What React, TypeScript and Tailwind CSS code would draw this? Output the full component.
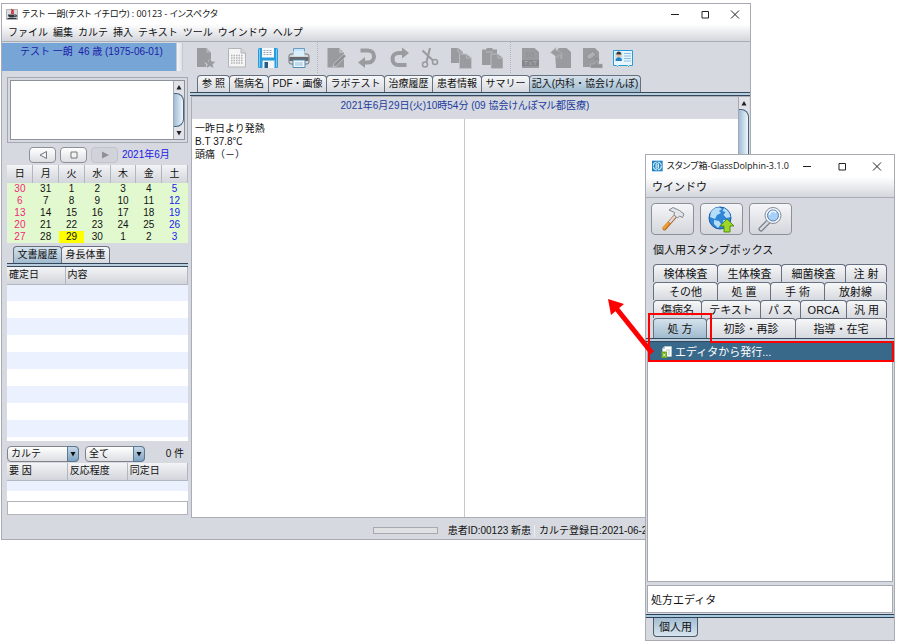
import clsx from "clsx";
import type { ReactNode } from "react";

const GRAY = "#999b9e";

const menus = ["ファイル", "編集", "カルテ", "挿入", "テキスト", "ツール", "ウインドウ", "ヘルプ"];

const chartTabs = [
  { label: "参 照", width: "w-[31px]" },
  { label: "傷病名", width: "w-[38px]" },
  { label: "PDF・画像", width: "w-[57px]" },
  { label: "ラボテスト", width: "w-[57px]" },
  { label: "治療履歴", width: "w-[47px]" },
  { label: "患者情報", width: "w-[48px]" },
  { label: "サマリー", width: "w-[47px]" },
  { label: "記入(内科・協会けんぽ)", width: "w-[110px]", active: true },
];

const stampTabs = [
  [
    { label: "検体検査", width: "w-[63px]" },
    { label: "生体検査", width: "w-[63px]" },
    { label: "細菌検査", width: "w-[63px]" },
    { label: "注 射", width: "flex-1" },
  ],
  [
    { label: "その他", width: "w-[63px]" },
    { label: "処 置", width: "w-[52px]" },
    { label: "手 術", width: "w-[53px]" },
    { label: "放射線", width: "flex-1" },
  ],
  [
    { label: "傷病名", width: "w-[47px]" },
    { label: "テキスト", width: "w-[58px]" },
    { label: "パ ス", width: "w-[39px]" },
    { label: "ORCA", width: "w-[45px]" },
    { label: "汎 用", width: "flex-1" },
  ],
  [
    { label: "処 方", width: "w-[52px]", active: true },
    { label: "初診・再診", width: "w-[88px]" },
    { label: "指導・在宅", width: "flex-1" },
  ],
];

const weekdays = ["日", "月", "火", "水", "木", "金", "土"];

const weeks = [
  [30, 31, 1, 2, 3, 4, 5],
  [6, 7, 8, 9, 10, 11, 12],
  [13, 14, 15, 16, 17, 18, 19],
  [20, 21, 22, 23, 24, 25, 26],
  [27, 28, 29, 30, 1, 2, 3],
];

export default function App() {
  return (
    <div className="relative flex min-h-screen bg-white pt-[3px] pr-[149px] pb-[104px] pl-px font-['Liberation_Sans','Noto_Sans_CJK_JP',sans-serif] text-[#111]">
      <InspectorWindow />
      <StampWindow />
    </div>
  );
}

function InspectorWindow() {
  return (
    <main className="flex min-w-0 flex-1 flex-col border border-[#a9abb3] bg-[#d6d9df] text-[10px] leading-3">
      <header className="flex h-5 items-center bg-white pl-1">
        <JavaIcon />
        <h1 className="ml-1 flex-1 truncate font-['Open_Sans','Noto_Sans_CJK_JP',sans-serif] text-[9px] [font-feature-settings:'palt']">
          テスト 一朗(テスト イチロウ) : 00123 - インスペクタ
        </h1>
        <WindowButtons width="w-[30px]" />
      </header>
      <nav className="flex h-[18px] items-center gap-[5px] border-b border-[#a9adb5] bg-linear-to-b from-white to-[#d3d6dc] pl-[6px]">
        {menus.map((menu) => (
          <button key={menu}>{menu}</button>
        ))}
      </nav>
      <div className="flex min-h-0 flex-1">
        <PatientPanel />
        <ChartPanel />
      </div>
    </main>
  );
}

function PatientPanel() {
  return (
    <aside className="flex w-[188px] shrink-0 flex-col">
      <div className="mt-px flex h-7">
        <div className="w-[174px] bg-[#77a6d6] pt-[3px] pl-[18px] whitespace-pre text-[#1c1ca8]">
          テスト 一朗  46 歳 (1975-06-01)
        </div>
        <div className="w-[7px] border-x border-[#c3c7cf] bg-linear-to-r from-[#f4f5f8] to-[#dfe2e8]" />
      </div>

      <div className="mt-[6px] mr-[2px] ml-[5px] flex flex-1 flex-col">
        <div className="h-[66px] border border-[#a4a8b0] p-[2px]">
          <div className="flex h-full border border-[#8e929a] bg-white">
            <textarea aria-label="メモ" className="min-w-0 flex-1 resize-none outline-none" />
            <ScrollBar thumb="h-9" />
          </div>
        </div>

        <div className="mt-1 flex h-4 items-center pl-[22px]">
          <PagerButton label="前の月">
            <path d="M8.5 1.5v7L2 5z" fill="#f2f2f2" stroke="#777" />
          </PagerButton>
          <PagerButton label="今月">
            <path d="M2 2h6v6H2z" fill="#f2f2f2" stroke="#777" />
          </PagerButton>
          <PagerButton label="次の月" disabled>
            <path d="M2 1.500v7L9 5z" fill="#8e9096" />
          </PagerButton>
          <span className="text-[#1a1ae6]">2021年6月</span>
        </div>

        <table className="mt-[2px] w-full table-fixed border-collapse text-center">
          <thead>
            <tr className="h-[18px] bg-linear-to-b from-[#f3f4f6] to-[#d2d5db]">
              {weekdays.map((day) => (
                <th key={day} className="border-r border-[#b2b6be] p-0 font-normal">
                  {day}
                </th>
              ))}
            </tr>
          </thead>
          <tbody className="bg-[#e2f9cf]">
            {weeks.map((week, row) => (
              <tr key={row} className="h-3">
                {week.map((day, i) => (
                  <td
                    key={i}
                    className={clsx(
                      "p-0",
                      i === 0 && "text-[#f02878]",
                      i === 6 && "text-[#1a1af0]",
                      day === 29 && "bg-[#ffff00]"
                    )}
                  >
                    {day}
                  </td>
                ))}
              </tr>
            ))}
          </tbody>
        </table>

        <div className="mt-[3px] flex h-[17px] pl-[6px]">
          <Tab width="w-[47px]" active>
            文書履歴
          </Tab>
          <Tab width="w-[47px]">身長体重</Tab>
        </div>
        <TabLine />
        <div className="flex-1 bg-white">
          <table className="w-full table-fixed border-collapse text-left">
            <thead>
              <tr className="h-[17px] bg-linear-to-b from-[#f3f4f6] to-[#d2d5db]">
                <th className="w-[58px] border-r border-b border-[#b2b6be] p-0 pl-[2px] font-normal">確定日</th>
                <th className="border-r border-b border-[#b2b6be] p-0 pl-[2px] font-normal">内容</th>
              </tr>
            </thead>
            <tbody>
              {Array.from({ length: 9 }, (_, i) => (
                <tr key={i} className="h-[17px] odd:bg-[#ebf1fe]">
                  <td className="p-0" />
                  <td className="p-0" />
                </tr>
              ))}
            </tbody>
          </table>
        </div>

        <div className="mt-[5px] flex h-4 items-center">
          <Combo label="文書種別" value="カルテ" width="w-[72px]" />
          <div className="w-[6px]" />
          <Combo label="期間" value="全て" width="w-[60px]" />
          <span className="flex-1 pr-1 text-right">0 件</span>
        </div>
        <table className="mt-px w-full table-fixed border-collapse bg-white text-left">
          <thead>
            <tr className="h-[17px] bg-linear-to-b from-[#f3f4f6] to-[#d2d5db]">
              {["要 因", "反応程度", "同定日"].map((title) => (
                <th key={title} className="border-r border-b border-[#b2b6be] p-0 pl-[2px] font-normal">
                  {title}
                </th>
              ))}
            </tr>
          </thead>
          <tbody>
            <tr className="h-[11px] bg-[#ebf1fe]">
              <td colSpan={3} className="p-0" />
            </tr>
            <tr className="h-[10px]">
              <td colSpan={3} className="p-0" />
            </tr>
          </tbody>
        </table>
        <input aria-label="アレルギー" className="mb-6 h-[14px] w-full border border-[#b0b3b9] bg-white outline-none" />
      </div>
    </aside>
  );
}

function ChartPanel() {
  return (
    <section className="flex min-w-0 flex-1 flex-col">
      <div className="flex h-[31px] items-center">
        <ToolButton label="新規カルテ">
          <path d="M2 1h9.500l4.500 4.500V12l-2 .5-1.500 2.500-3 .5 2 2.500-.5 2H2z" fill={GRAY} />
          <path d="M11.500 1v4.500H16z" fill="#b5b7ba" />
          <path d="m15 11 1.600 3.400 3.900.3-3 2.500.9 3.800-3.400-2-3.400 2 .9-3.800-3-2.500 3.900-.3z" fill={GRAY} />
        </ToolButton>
        <ToolButton label="カルテ展開">
          <path d="M2.500 1.500H15L19.500 6v14h-17z" fill="#f5f5f5" stroke="#b2b4b8" />
          <path d="M15 1.500V6h4.500" fill="#d4d6da" stroke="#b2b4b8" />
          <path d="M5 8.500h12M5 11h12M5 13.500h12M5 16h12" stroke="#aeb0b4" strokeWidth="1.500" strokeDasharray="1.500 1" />
        </ToolButton>
        <ToolButton label="保存">
          <rect x="1" y="1" width="20" height="20" rx="1.500" fill="#289bdc" />
          <path d="M2.500 2v18M19.500 2v18" stroke="#7ccaf2" />
          <path d="M5 1h12v9.500H5z" fill="#f7f9fb" />
          <path d="M6.500 3.500h9M6.500 5.500h9M6.500 7.500h9" stroke="#9ba6b3" strokeDasharray="2 1" />
          <path d="M5.500 13.500h12V21h-12z" fill="#f4f4f4" />
          <path d="M7.500 15H11v6H7.500z" fill="#245c87" />
        </ToolButton>
        <ToolButton label="印刷">
          <path d="M5.500 1.500h11v8h-11z" fill="#c7e6fb" stroke="#6a9cc4" />
          <rect x="1" y="7" width="20" height="10" rx="2" fill="#d3d5d8" stroke="#73767b" />
          <path d="M1.500 10h19v4h-19z" fill="#65686d" />
          <path d="M5.500 4h11v5h-11z" fill="#d9effc" />
          <path d="M5 13h12v7.500H5z" fill="#edf7fd" stroke="#538bb5" />
          <path d="M7 16h8M7 18h8" stroke="#91bfdf" />
        </ToolButton>
        <ToolSeparator />
        <ToolButton label="編集">
          <path d="M1.500 1H13l5 5v14.500H1.500z" fill={GRAY} />
          <path d="M13 1v5h5z" fill="#b5b7ba" />
          <path d="m8 16.500 10-9.500 2 2.200-9.500 9.800-3.500 1z" fill="#8d8f93" stroke="#c8cad0" strokeWidth=".8" />
        </ToolButton>
        <ToolButton label="元に戻す">
          <path d="M3.500 3.500H11c8 0 8 12 0 12H6" fill="none" stroke={GRAY} strokeWidth="4" />
          <path d="M8 10v11l-7-5.500z" fill={GRAY} />
        </ToolButton>
        <ToolButton label="やり直す">
          <path d="M18.500 18H10.500c-8 0-8-12 0-12H15" fill="none" stroke={GRAY} strokeWidth="4" />
          <path d="M14 .5v11L21 6z" fill={GRAY} />
        </ToolButton>
        <ToolButton label="切り取り">
          <path d="m3.500 3.500 10.500 10M11 1 7.500 15" stroke={GRAY} strokeWidth="2" />
          <circle cx="6" cy="17.500" r="2.500" fill="none" stroke={GRAY} strokeWidth="1.600" />
          <circle cx="16" cy="15" r="2.500" fill="none" stroke={GRAY} strokeWidth="1.600" />
        </ToolButton>
        <ToolButton label="コピー">
          <path d="M1 1h7l5 4v11H1z" fill={GRAY} />
          <path d="M9.500 7h7l5 4v10.500h-12z" fill={GRAY} stroke="#c2c4c9" strokeWidth=".8" />
          <path d="M8 1v4h5M16.500 7v4h5" fill="none" stroke="#bfc1c5" strokeWidth=".8" />
        </ToolButton>
        <ToolButton label="貼り付け">
          <path d="M1 2.500h4.500V1h6v1.500H16V18H1z" fill={GRAY} />
          <path d="M10 7h7l5 4v10.500H10z" fill={GRAY} stroke="#c2c4c9" strokeWidth=".8" />
          <path d="M17 7v4h5M5 5h7" fill="none" stroke="#bfc1c5" strokeWidth=".8" />
        </ToolButton>
        <ToolSeparator />
        <ToolButton label="テキスト出力">
          <path d="M3 1h12.500L20 5v16H3z" fill={GRAY} />
          <path d="M7 6.500h9M7 9h9" stroke="#8b8d91" strokeDasharray="2 1" />
          <path d="M3 13h17v6H3z" fill="#85878b" />
          <path d="M5 14.500h4M7 14.500V18m3-3.500 3 3.500m0-3.500L10 18m4-3.500h4m-2 0V18" stroke="#a4a6aa" fill="none" />
        </ToolButton>
        <ToolButton label="取り込み">
          <path d="M5 5 9 1h7.500L21 5v16H6z" fill={GRAY} />
          <path d="M11 12V8H8v3L.5 5.500 6 .5v3c5 0 7 3 5 8.500z" fill={GRAY} stroke="#bfc1c5" strokeWidth=".6" />
        </ToolButton>
        <ToolButton label="スタンプ">
          <path d="M2 1h12l4 4v15H2z" fill={GRAY} />
          <path d="m5 9 7-5 3 4-7 5z" fill="#aeb0b4" stroke="#83858a" strokeWidth=".7" />
          <circle cx="15.500" cy="13" r="2.700" fill="#8f9195" />
          <path d="M14 14h3v3h4.500v4h-12v-4H14z" fill="#8f9195" stroke="#bcbec3" strokeWidth=".5" />
        </ToolButton>
        <ToolButton label="患者カード">
          <path d="M1.500 3.500h19v15h-3l-1 1-1-1h-9l-1 1-1-1h-3z" fill="#e6f6fe" stroke="#2c9bd0" />
          <path d="M3 5h7.500v8H3z" fill="#bfe3f7" />
          <circle cx="6.800" cy="8" r="2.300" fill="#f1bd8d" />
          <path d="M4.300 7.500c0-4 5-4 5 0z" fill="#3b3433" />
          <path d="M3.500 14c0-5 6.500-5 6.500 0z" fill="#287ec2" />
          <path d="M12 6.500h7M12 9h7M12 11.500h7M12 14h7" stroke="#8abde0" />
        </ToolButton>
      </div>

      <div className="mt-[2px] flex h-[17px] pl-[7px]">
        {chartTabs.map((tab) => (
          <Tab key={tab.label} width={tab.width} active={tab.active}>
            {tab.label}
          </Tab>
        ))}
      </div>
      <TabLine />

      <div className="ml-px flex flex-1 flex-col border border-r-0 border-[#a9adb5] pr-px">
        <div className="flex flex-1">
          <div className="flex min-w-0 flex-1 flex-col">
            <div className="flex h-[22px] items-center justify-center pb-[4px] text-[#1c3ca0] [font-feature-settings:'palt']">
              2021年6月29日(火)10時54分 (09 協会けんぽマル都医療)
            </div>
            <div className="grid flex-1 grid-cols-2 bg-white">
              <div className="border-r border-[#c5c8d0] px-[3px] pt-[3px] leading-[13px]">
                <p>一昨日より発熱</p>
                <p>B.T 37.8℃</p>
                <p>頭痛（－）</p>
              </div>
              <div />
            </div>
          </div>
          <ScrollBar thumb="h-[220px]" />
        </div>
      </div>

      <footer className="flex h-[21px] items-center justify-end pt-[4px] pr-[97px] whitespace-nowrap">
        <div className="h-[7px] w-[65px] border border-[#a6a9af] bg-[#dfe0e2]" />
        <span className="ml-[10px]">患者ID:00123 新患</span>
        <span className="mr-[4px] ml-[3px] h-3 w-px bg-[#eceef1]" />
        <span>カルテ登録日:2021-06-29</span>
      </footer>
    </section>
  );
}

function StampWindow() {
  return (
    <section className="absolute top-[154px] right-[5px] bottom-[3px] flex w-[250px] flex-col border border-[#a9abb3] bg-[#d6d9df] text-[11px] leading-[14px]">
      <header className="flex h-[22px] items-center bg-white pl-[6px]">
        <svg viewBox="0 0 12 12" className="size-3">
          <path d="M0 0h12v12H0z" fill="#1d83c4" />
          <circle cx="6" cy="6" r="4.500" fill="none" stroke="#d5efff" strokeWidth="1.300" strokeDasharray="6 1" />
          <path d="M4.500 3.500h2.800v5H4.500zM4.500 6h2.800" fill="none" stroke="#fff" />
        </svg>
        <h2 className="ml-1 flex-1 font-['Open_Sans','Noto_Sans_CJK_JP',sans-serif] text-[9px] whitespace-nowrap [font-feature-settings:'palt']">
          スタンプ箱-GlassDolphin-3.1.0
        </h2>
        <WindowButtons width="w-[35px]" />
      </header>
      <nav className="flex h-[21px] items-center border-b border-[#a9adb5] bg-linear-to-b from-white to-[#d3d6dc] pl-[6px]">
        <button>ウインドウ</button>
      </nav>

      <div className="mt-[5px] flex gap-[6px] pl-[5px]">
        <StampButton label="設定">
          <path d="m5.500 22.500 10-11.500" stroke="#b3651f" strokeWidth="4" strokeLinecap="round" />
          <path d="m5 22 4-4.500" stroke="#ed9b2f" strokeWidth="3" strokeLinecap="round" />
          <path d="m10.500 16.500 6-7" stroke="#d8dbe0" strokeWidth="2.500" />
          <path d="m10 4 4-2.500 6.500 3L25 8l-1.500 3.500-3-1.500-2 2-3.500-3 .5-2.500z" fill="#e3e6eb" stroke="#777d87" strokeWidth=".9" />
        </StampButton>
        <StampButton label="更新">
          <circle cx="12" cy="12" r="11" fill="#2f86d7" stroke="#1c5da6" />
          <path d="M3 6c4-6 9-5 11-3l-3 2 2 2-4 2-2 4-5-2zM16 2c4 2 6 5 6.500 9l-4 1-3-3 2-3-3-1zM6 14l5 1 2 3-3 4-4-4zM15 14h4l1 3-4 3z" fill="#b5dcf8" />
          <path d="m19 13 7 7h-4v6h-6v-6h-4z" fill="#9bd829" stroke="#528d13" />
        </StampButton>
        <StampButton label="検索">
          <path d="m11 16-7 7" stroke="#777d88" strokeWidth="5" strokeLinecap="round" />
          <path d="m11 16-7 7" stroke="#d6d9df" strokeWidth="2.500" strokeLinecap="round" />
          <circle cx="16" cy="9.500" r="8" fill="#f4f5f7" stroke="#858b95" />
          <circle cx="16" cy="9.500" r="5.500" fill="#a8cff5" stroke="#5183bb" />
          <path d="M12.500 9c0-4 5-5 6.500-2" stroke="#eef8ff" strokeWidth="1.500" fill="none" />
        </StampButton>
      </div>
      <p className="mt-[8px] pl-[7px]">個人用スタンプボックス</p>

      <div className="mt-[7px] px-[7px]">
        {stampTabs.map((row, i) => (
          <div key={i} className="flex h-[18px] last:h-[20px]">
            {row.map((tab) => (
              <Tab key={tab.label} width={tab.width} active={tab.active}>
                {tab.label}
              </Tab>
            ))}
          </div>
        ))}
      </div>
      <TabLine />
      <div className="mx-px flex-1 border border-t-0 border-[#a4a8b0] bg-white">
        <button className="flex h-[19px] w-full items-center bg-[#39698a] pl-[13px] text-white">
          <svg viewBox="0 0 11 12" className="mr-[3px] h-3 w-[11px]">
            <path d="M3.500.5h7v10h-9v-8z" fill="#fff" stroke="#c4cdd0" strokeWidth=".6" />
            <path d="M3.500.5v2h-2M5 4h4M7 6h2M7 8h2" fill="none" stroke="#93a7a9" strokeWidth=".7" />
            <path d="M.5 5.500H6V12H.5z" fill="#6eae1e" />
            <path d="m2 7.500 2.500 3m0-3L2 10.500" stroke="#e8f7cc" />
          </svg>
          エディタから発行...
        </button>
      </div>
      <input
        aria-label="スタンプ情報"
        readOnly
        value="処方エディタ"
        className="mx-px mt-[3px] h-7 border border-[#a4a8b0] bg-white px-[3px] outline-none"
      />
      <div className="mt-px h-[4px] border-y border-[#2f3f56] bg-[#a9cbe2]" />
      <div className="flex h-[22px] pb-[3px] pl-[7px]">
        <button className="w-[45px] rounded-b border border-t-0 border-[#4c5a6c] bg-linear-to-b from-[#a3bdd2] to-[#d8e5ee]">
          個人用
        </button>
      </div>
      <Callout />
    </section>
  );
}

/* red frame round the tab and its entry, with the arrow to the chart */
function Callout() {
  return (
    <svg viewBox="0 0 290 70" className="pointer-events-none absolute top-[143px] -left-[39px] h-[70px] w-[290px]">
      <path d="M42 16h62v28h182v19H42z" fill="none" stroke="#f00" strokeWidth="2" />
      <path d="M45 55 9 10" stroke="#f00" strokeWidth="5" />
      <path d="M1 1 17 6 4 17z" fill="#f00" />
    </svg>
  );
}

function Tab({ width, active, children }: { width: string; active?: boolean; children: ReactNode }) {
  return (
    <button
      className={clsx(
        "-mr-px box-content rounded-t border border-b-0 border-[#687080] bg-linear-to-b text-center whitespace-nowrap",
        active ? "from-[#d5e2ec] to-[#a0bbcf]" : "from-[#f6f7f8] to-[#d6d9df]",
        width,
        width === "flex-1" ? "last:mr-0" : "shrink-0"
      )}
    >
      {children}
    </button>
  );
}

const TabLine = () => <div className="h-[4px] shrink-0 border-y border-[#34475d] bg-[#b9cddd]" />;

function ScrollBar({ thumb }: { thumb: string }) {
  return (
    <div className="flex w-[11px] shrink-0 flex-col items-center overflow-hidden border-l border-[#a4a8b0] bg-[#e1e3e8]">
      <svg viewBox="0 0 10 12" className="h-3 w-[10px] shrink-0">
        <path d="M5 4 7.500 8.500h-5z" fill="#222" />
      </svg>
      <div
        className={clsx(
          "w-full rounded-r-lg border border-l-0 border-[#48627d] bg-linear-to-r from-[#9fbcd6] to-[#eef6fb]",
          thumb
        )}
      />
      <div className="flex-1" />
      <svg viewBox="0 0 10 12" className="h-3 w-[10px] shrink-0">
        <path d="M5 8.500 7.500 4h-5z" fill="#222" />
      </svg>
    </div>
  );
}

function PagerButton({ label, disabled, children }: { label: string; disabled?: boolean; children: ReactNode }) {
  return (
    <button
      aria-label={label}
      disabled={disabled}
      className={clsx(
        "mr-1 grid h-4 w-[27px] place-items-center rounded border",
        disabled ? "border-[#c0c3c9] bg-[#d0d3d9]" : "border-[#8d9097] bg-linear-to-b from-white to-[#dcdee2]"
      )}
    >
      <svg viewBox="0 0 10 10" className="size-[10px]">
        {children}
      </svg>
    </button>
  );
}

function Combo({ label, value, width }: { label: string; value: string; width: string }) {
  return (
    <div className={clsx("relative h-4", width)}>
      <select
        aria-label={label}
        className="h-4 w-full appearance-none rounded border border-[#7d828c] bg-linear-to-b from-white to-[#dcdee2] px-[3px] leading-3"
      >
        <option>{value}</option>
      </select>
      <span className="pointer-events-none absolute inset-y-0 right-0 grid w-3 place-items-center rounded-r border border-[#5c7890] bg-linear-to-b from-[#c6d8e7] to-[#7fa4c4]">
        <svg viewBox="0 0 6 6" className="size-[6px]">
          <path d="M.5 1h5L3 5.500z" fill="#111" />
        </svg>
      </span>
    </div>
  );
}

function ToolButton({ label, children }: { label: string; children: ReactNode }) {
  return (
    <button aria-label={label} className="grid w-[31px] shrink-0 place-items-center">
      <svg viewBox="0 0 22 22" className="size-[22px]">
        {children}
      </svg>
    </button>
  );
}

const ToolSeparator = () => <div className="mx-[3px] h-full shrink-0 border-l border-dotted border-[#b2b5bd]" />;

function StampButton({ label, children }: { label: string; children: ReactNode }) {
  return (
    <button
      aria-label={label}
      className="grid h-8 w-[43px] place-items-center rounded border border-[#8d9097] bg-linear-to-b from-[#f5f6f8] to-[#d3d6dc]"
    >
      <svg viewBox="0 0 27 27" className="size-[27px]">
        {children}
      </svg>
    </button>
  );
}

function WindowButtons({ width }: { width: string }) {
  const shapes = [
    { label: "最小化", d: "M1 5.500h8" },
    { label: "最大化", d: "M2 2.500h6.500V9H2z" },
    { label: "閉じる", d: "m1 1.500 8 8m0-8-8 8" },
  ];
  return (
    <div className="flex shrink-0">
      {shapes.map(({ label, d }) => (
        <button key={label} aria-label={label} className={clsx("grid place-items-center", width)}>
          <svg viewBox="0 0 10 11" className="h-[11px] w-[10px]">
            <path d={d} fill="none" stroke="#222" />
          </svg>
        </button>
      ))}
    </div>
  );
}

function JavaIcon() {
  return (
    <svg viewBox="0 0 12 12" className="size-3">
      <path d="M.5 1.500h11v10H.5z" fill="#d9dce0" stroke="#888" strokeWidth=".6" />
      <path d="M5.500 1c2 1.500-1 2.500.5 5M7.500 2c-1.500 1.500.5 2-.5 4" fill="none" stroke="#c9252c" strokeWidth="1.200" />
      <path d="M2 6.500h6.500c0 3-1 3-2 3h-2C3 9.500 2 8.500 2 6.500z" fill="#30363f" />
      <path d="M8.500 7h1.800v1.700H8M1.500 10.500h9" fill="none" stroke="#30363f" />
    </svg>
  );
}
